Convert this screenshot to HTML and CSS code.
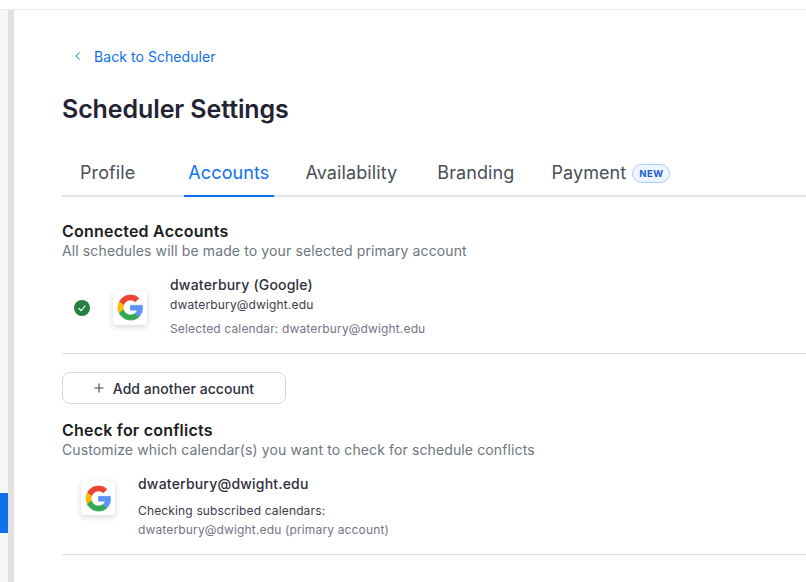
FILE: index.html
```html
<!DOCTYPE html>
<html lang="en">
<head>
    <meta charset="UTF-8">
    <title>Scheduler Settings</title>
    <link rel="stylesheet" href="styles.css">
</head>
<body>
    <div class="topbar"></div>
    <div class="layout">
        <div class="rail"><div class="rail-mark"></div></div>
        <div class="scroll-track"></div>
        <div class="content">
            <a class="back-link" href="#">
                <svg class="back-icon" width="8" height="10" viewBox="0 0 8 10"><path d="M5.5 1.5 2.2 5l3.3 3.5" fill="none" stroke="#0e71eb" stroke-width="1"/></svg>
                Back to Scheduler
            </a>
            <h1>Scheduler Settings</h1>

            <div class="tabs">
                <div class="tab tab-profile">Profile</div>
                <div class="tab tab-accounts active">Accounts</div>
                <div class="tab tab-availability">Availability</div>
                <div class="tab tab-branding">Branding</div>
                <div class="tab tab-payment">Payment <span class="badge">NEW</span></div>
            </div>

            <h2 class="first">Connected Accounts</h2>
            <p class="sub">All schedules will be made to your selected primary account</p>

            <div class="account">
                <svg class="check" width="16" height="16" viewBox="0 0 16 16"><circle cx="8" cy="8" r="8" fill="#23803f"/><path d="M4.6 8.2 7 10.6l4.4-5" fill="none" stroke="#fff" stroke-width="1.1"/></svg>
                <div class="logo">
                    <svg width="25" height="25" viewBox="0 0 48 48"><path class="g-red" d="M24 9.5c3.54 0 6.71 1.22 9.21 3.6l6.85-6.85C35.9 2.38 30.47 0 24 0 14.62 0 6.51 5.38 2.56 13.22l7.98 6.19C12.43 13.72 17.74 9.5 24 9.5z"/><path class="g-blue" d="M46.98 24.55c0-1.57-.15-3.09-.38-4.55H24v9.02h12.94c-.58 2.96-2.26 5.48-4.78 7.18l7.73 6c4.51-4.18 7.09-10.36 7.09-17.65z"/><path class="g-yellow" d="M10.53 28.59c-.48-1.45-.76-2.99-.76-4.59s.27-3.14.76-4.59l-7.98-6.19C.92 16.46 0 20.12 0 24c0 3.88.92 7.54 2.56 10.78l7.97-6.19z"/><path class="g-green" d="M24 48c6.48 0 11.93-2.13 15.89-5.81l-7.73-6c-2.15 1.45-4.92 2.3-8.16 2.3-6.26 0-11.57-4.22-13.47-9.91l-7.98 6.19C6.51 42.62 14.62 48 24 48z"/></svg>
                </div>
                <div class="account-info">
                    <div class="account-name">dwaterbury (Google)</div>
                    <div class="account-mail">dwaterbury@dwight.edu</div>
                    <div class="account-cal">Selected calendar: dwaterbury@dwight.edu</div>
                </div>
            </div>

            <button class="add-btn">
                <svg width="10" height="10" viewBox="0 0 10 10"><path d="M5 .5v9M.5 5h9" stroke="#444" stroke-width="1.1"/></svg>
                Add another account
            </button>

            <h2>Check for conflicts</h2>
            <p class="sub">Customize which calendar(s) you want to check for schedule conflicts</p>

            <div class="conflict">
                <div class="logo">
                    <svg width="25" height="25" viewBox="0 0 48 48"><path class="g-red" d="M24 9.5c3.54 0 6.71 1.22 9.21 3.6l6.85-6.85C35.9 2.38 30.47 0 24 0 14.62 0 6.51 5.38 2.56 13.22l7.98 6.19C12.43 13.72 17.74 9.5 24 9.5z"/><path class="g-blue" d="M46.98 24.55c0-1.57-.15-3.09-.38-4.55H24v9.02h12.94c-.58 2.96-2.26 5.48-4.78 7.18l7.73 6c4.51-4.18 7.09-10.36 7.09-17.65z"/><path class="g-yellow" d="M10.53 28.59c-.48-1.45-.76-2.99-.76-4.59s.27-3.14.76-4.59l-7.98-6.19C.92 16.46 0 20.12 0 24c0 3.88.92 7.54 2.56 10.78l7.97-6.19z"/><path class="g-green" d="M24 48c6.48 0 11.93-2.13 15.89-5.81l-7.73-6c-2.15 1.45-4.92 2.3-8.16 2.3-6.26 0-11.57-4.22-13.47-9.91l-7.98 6.19C6.51 42.62 14.62 48 24 48z"/></svg>
                </div>
                <div class="conflict-info">
                    <div class="conflict-mail">dwaterbury@dwight.edu</div>
                    <div class="conflict-label">Checking subscribed calendars:</div>
                    <div class="conflict-cal">dwaterbury@dwight.edu (primary account)</div>
                </div>
            </div>
        </div>
    </div>
</body>
</html>
```

FILE: styles.css
```css
html, body {
    margin: 0;
    padding: 0;
    height: 100%;
    overflow: hidden;
}

body {
    font-family: 'Inter', sans-serif;
    background-color: #fff;
    color: #131619;
}

.topbar {
    height: 9px;
    border-bottom: 1px solid #ececf0;
}

.layout {
    display: flex;
    height: 572px;
}

.rail {
    width: 8px;
    background-color: #f7f7fa;
    padding-top: 483px;
    box-sizing: border-box;
}

.rail-mark {
    height: 40px;
    background-color: #0e71eb;
}

.scroll-track {
    width: 6px;
    background-color: #e1e1e1;
}

.content {
    flex: 1;
    padding-left: 48px;
    min-width: 0;
}

.back-link {
    display: flex;
    align-items: center;
    margin-top: 37px;
    height: 18px;
    font-size: 14px;
    letter-spacing: 0.06px;
    color: #0e71eb;
    text-decoration: none;
}

.back-icon {
    margin-left: 12px;
    margin-right: 12px;
}

h1 {
    margin: 27px 0 0 0;
    font-size: 25px;
    line-height: 34px;
    font-weight: 600;
    letter-spacing: -0.1px;
    color: #232333;
}

.tabs {
    display: flex;
    margin-top: 34px;
    height: 35px;
    border-bottom: 2px solid #dfe3e8;
}

.tab {
    font-size: 18px;
    line-height: 24px;
    letter-spacing: 0.1px;
    padding-top: 1px;
    color: #4a4f57;
    height: 34px;
}

.tab-profile { margin-left: 18px; }
.tab-accounts { margin-left: 49px; padding-left: 4px; padding-right: 5px; }
.tab-availability { margin-left: 31px; }
.tab-branding { margin-left: 40px; }
.tab-payment { margin-left: 37px; display: flex; align-items: flex-start; gap: 6px; }

.tab.active {
    color: #0e71eb;
    border-bottom: 2px solid #0e71eb;
}

.badge {
    display: inline-block;
    margin-top: 3px;
    height: 17px;
    line-height: 17px;
    padding: 0 6px;
    font-size: 9.5px;
    font-weight: 700;
    letter-spacing: 0.4px;
    color: #1c5ec7;
    background-color: #eef5ff;
    border: 1px solid #a9cdfb;
    border-radius: 10px;
}

h2 {
    margin: 0;
    font-size: 16px;
    line-height: 20px;
    font-weight: 600;
    letter-spacing: 0.22px;
    color: #1b1d22;
}

h2.first {
    margin-top: 24px;
}

.sub {
    margin: 1px 0 0 0;
    font-size: 14px;
    line-height: 18px;
    letter-spacing: 0.12px;
    color: #6e7680;
}

.account {
    display: flex;
    align-items: center;
    height: 91px;
    margin-top: 2px;
    border-bottom: 1px solid #dcdce0;
}

.check {
    margin-left: 12px;
    margin-right: 23px;
}

.logo {
    width: 34px;
    height: 34px;
    border-radius: 4px;
    background-color: #fff;
    box-shadow: 0 2px 6px rgba(0, 0, 0, 0.16);
    display: flex;
    align-items: center;
    justify-content: center;
}

.logo svg {
    overflow: visible;
}

.logo path {
    stroke-width: 1.5;
}

.g-red { fill: #ea4335; stroke: #ea4335; }
.g-blue { fill: #5a95f5; stroke: #5a95f5; }
.g-yellow { fill: #fbbc05; stroke: #fbbc05; }
.g-green { fill: #34a853; stroke: #34a853; }

.account-info {
    margin-left: 23px;
    margin-bottom: 2px;
}

.account-name {
    font-size: 14px;
    line-height: 18px;
    font-weight: 500;
    letter-spacing: 0.2px;
    color: #2f2f3c;
}

.account-mail {
    margin-top: 2px;
    font-size: 12px;
    line-height: 18px;
    letter-spacing: 0.15px;
    color: #3c3c4a;
}

.account-cal {
    margin-top: 6px;
    font-size: 12px;
    line-height: 18px;
    letter-spacing: 0.15px;
    color: #747487;
}

.add-btn {
    display: flex;
    align-items: center;
    justify-content: center;
    gap: 9px;
    width: 224px;
    height: 32px;
    margin-top: 18px;
    margin-bottom: 16px;
    font-family: 'Inter', sans-serif;
    font-size: 14px;
    font-weight: 500;
    letter-spacing: 0.05px;
    color: #2f2f3c;
    background-color: #fff;
    border: 1px solid #d9d9de;
    border-radius: 8px;
}

.conflict {
    display: flex;
    align-items: flex-start;
    height: 95px;
    border-bottom: 1px solid #dcdce0;
}

.conflict .logo {
    margin-left: 19px;
    margin-top: 22px;
}

.conflict-info {
    margin-left: 23px;
    padding-top: 16px;
}

.conflict-mail {
    font-size: 14px;
    line-height: 18px;
    font-weight: 500;
    letter-spacing: 0.2px;
    color: #2f2f3c;
}

.conflict-label {
    margin-top: 9px;
    font-size: 12px;
    line-height: 18px;
    letter-spacing: 0.15px;
    color: #3c3c4a;
}

.conflict-cal {
    margin-top: 1px;
    font-size: 12px;
    line-height: 18px;
    letter-spacing: 0.15px;
    color: #747487;
}
```
